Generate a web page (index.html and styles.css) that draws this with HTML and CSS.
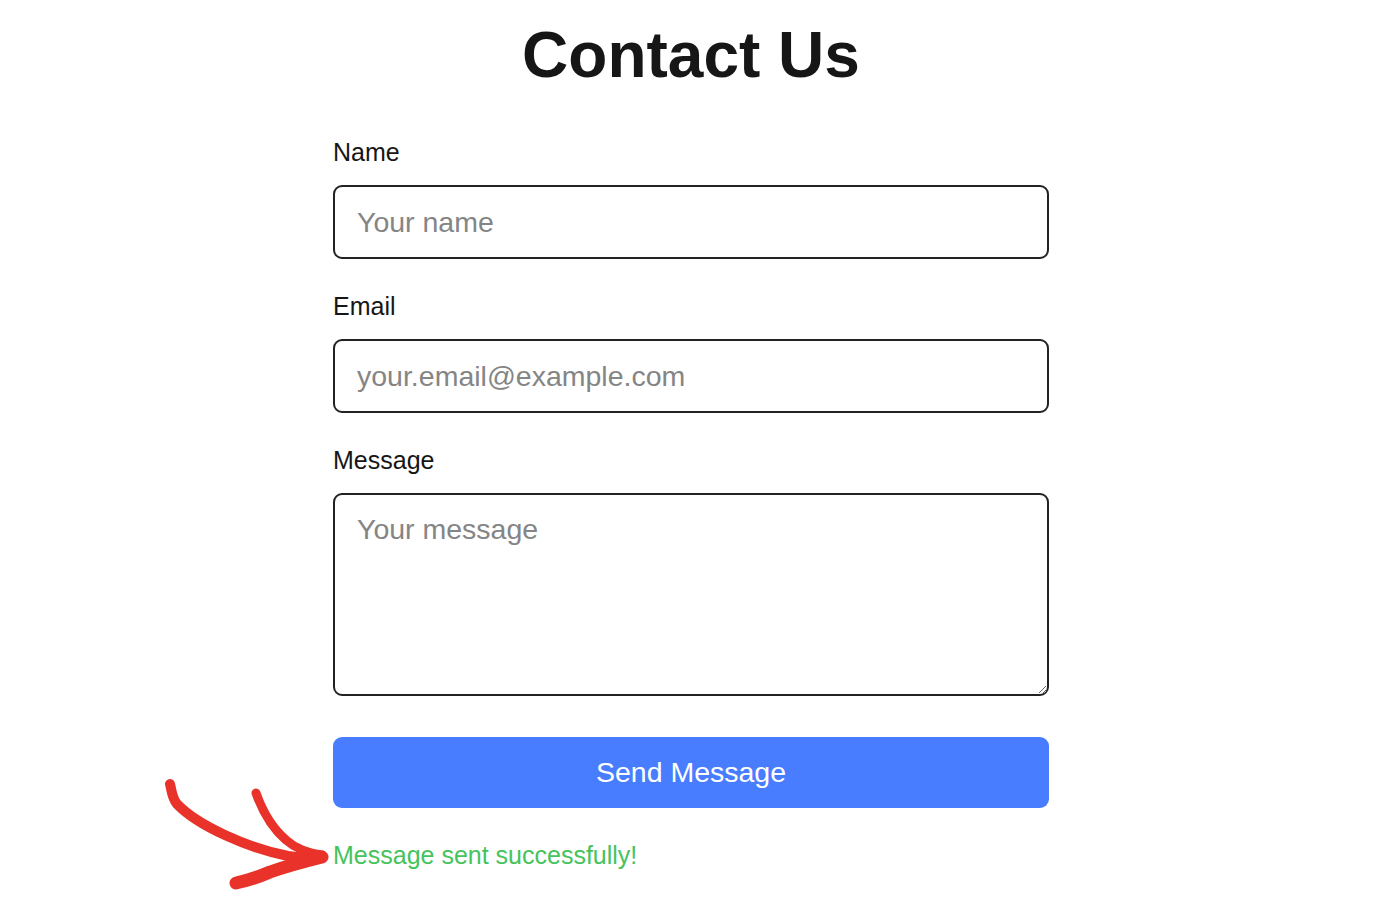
FILE: index.html
```html
<!DOCTYPE html>
<html lang="en">
<head>
<meta charset="utf-8">
<title>Contact Us</title>
<link rel="stylesheet" href="styles.css">
</head>
<body>
<div class="page">
  <h1 class="title">Contact Us</h1>
  <form class="form">
    <div class="group">
      <label class="label" for="name">Name</label>
      <input class="field" id="name" type="text" placeholder="Your name">
    </div>
    <div class="group">
      <label class="label" for="email">Email</label>
      <input class="field" id="email" type="email" placeholder="your.email@example.com">
    </div>
    <div class="group last">
      <label class="label" for="msg">Message</label>
      <textarea class="field area" id="msg" placeholder="Your message"></textarea>
    </div>
    <button class="send" type="button">Send Message</button>
    <p class="success">Message sent successfully!</p>
  </form>
  <svg class="arrow" viewBox="150 770 190 130" width="190" height="130" aria-hidden="true">
    <g fill="none" stroke="#e8322a" stroke-linecap="round" stroke-linejoin="round">
      <path d="M170 784 C172 792 172 798 177 804 C198 826 248 848 288 856 C300 858 312 858 322 857" stroke-width="10"/>
      <path d="M256 793 C262 810 272 828 286 840 C296 849 308 853 322 855" stroke-width="9"/>
      <path d="M322 857 C302 862 284 867 270 872 C256 878 246 881 236 883" stroke-width="13"/>
    </g>
  </svg>
</div>
</body>
</html>
```
FILE: styles.css
```css
html, body {
  margin: 0;
  padding: 0;
  background: #ffffff;
}
body {
  font-family: "Liberation Sans", Arial, Helvetica, sans-serif;
  color: #1a1a1a;
}
.page {
  position: relative;
  display: flow-root;
  width: 1382px;
  min-height: 917px;
  padding-top: 18px;
  box-sizing: border-box;
}
.title {
  margin: 0;
  font-size: 64px;
  line-height: 74px;
  font-weight: 700;
  text-align: center;
  color: #161616;
}
.form {
  width: 716px;
  margin: 46px auto 0;
  display: flex;
  flex-direction: column;
}
.group {
  display: flex;
  flex-direction: column;
  margin-bottom: 33px;
}
.group.last {
  margin-bottom: 41px;
}
.label {
  font-size: 25px;
  line-height: 28px;
  margin-bottom: 19px;
  color: #161616;
}
.field {
  box-sizing: border-box;
  width: 716px;
  height: 74px;
  border: 2px solid #222222;
  border-radius: 9px;
  padding: 0 22px;
  font-family: "Liberation Sans", Arial, sans-serif;
  font-size: 28.5px;
  color: #222;
  background: #fff;
  outline: none;
}
.field::placeholder {
  color: #858585;
}
.area {
  height: 203px;
  padding-top: 18px;
  line-height: 32px;
  resize: vertical;
  display: block;
}
.send {
  height: 71px;
  border: none;
  border-radius: 9px;
  background: #487dff;
  color: #ffffff;
  font-family: "Liberation Sans", Arial, sans-serif;
  font-size: 28.5px;
  cursor: pointer;
}
.success {
  margin: 33px 0 0;
  font-size: 25px;
  line-height: 28px;
  color: #45c35c;
}
.arrow {
  position: absolute;
  left: 150px;
  top: 770px;
}
```
